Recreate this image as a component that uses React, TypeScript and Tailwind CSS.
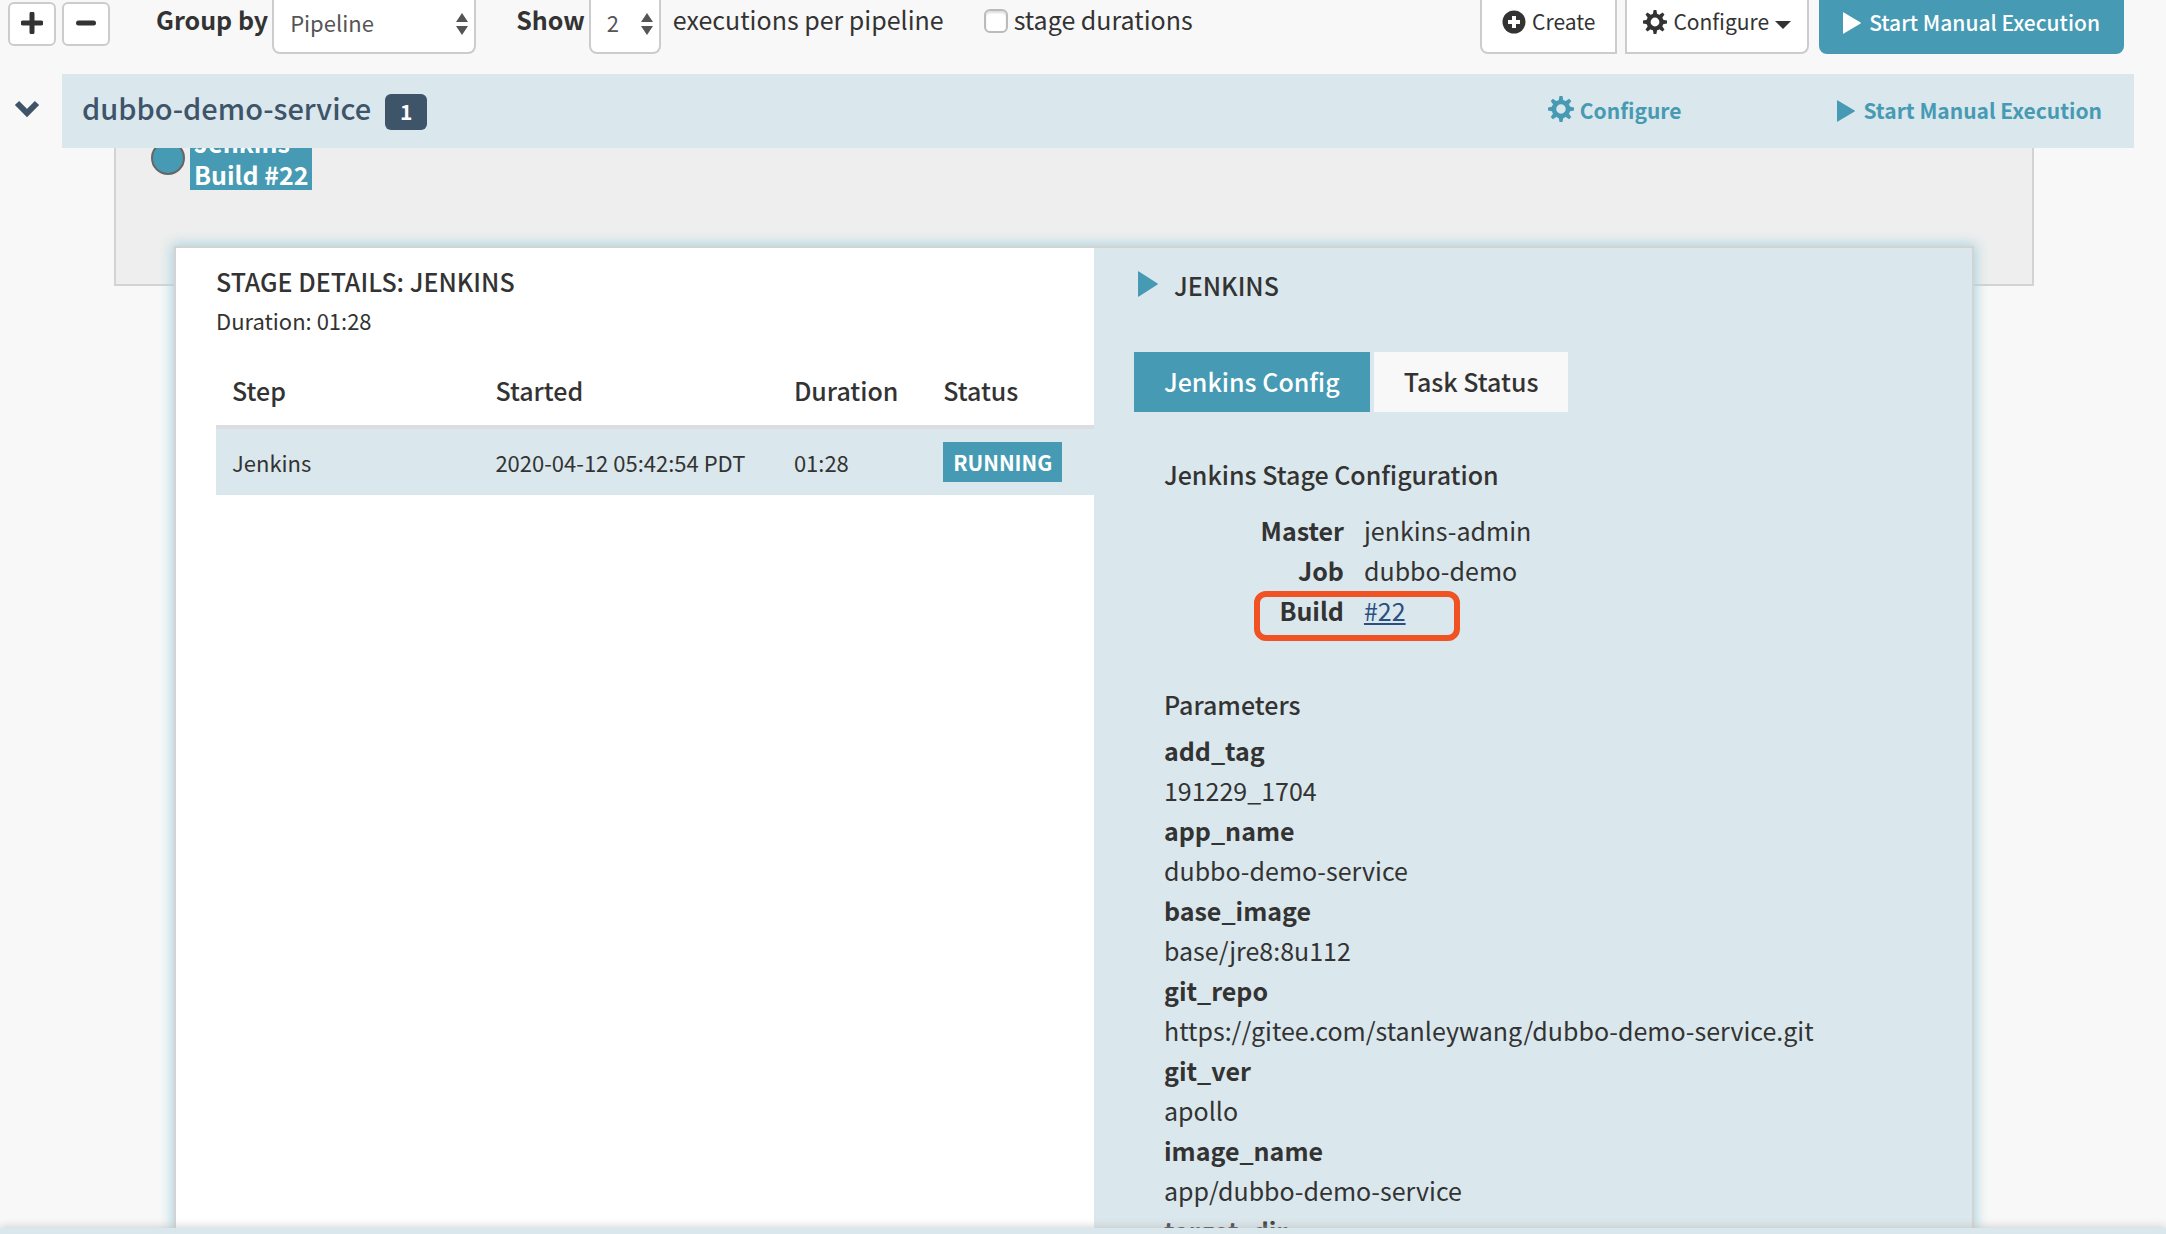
import React, { useState } from 'react';

const parameters = [
    { name: 'add_tag', value: '191229_1704' },
    { name: 'app_name', value: 'dubbo-demo-service' },
    { name: 'base_image', value: 'base/jre8:8u112' },
    { name: 'git_repo', value: 'https://gitee.com/stanleywang/dubbo-demo-service.git' },
    { name: 'git_ver', value: 'apollo' },
    { name: 'image_name', value: 'app/dubbo-demo-service' },
    { name: 'target_dir', value: './dubbo-server/target' },
];

const teeth = [0, 45, 90, 135, 180, 225, 270, 315];

function Cog({ className }: { className?: string }) {
    return (
        <svg viewBox="0 0 24 24" className={className} aria-hidden="true">
            <circle cx="12" cy="12" r="6.5" fill="none" stroke="currentColor" strokeWidth="4.2" />
            {teeth.map(angle => (
                <path key={angle} d="M9.8 4.5 10.6 0h2.8l.8 4.5z" fill="currentColor" transform={`rotate(${angle} 12 12)`} />
            ))}
        </svg>
    );
}

function Play({ className }: { className?: string }) {
    return (
        <svg viewBox="0 0 18 22" preserveAspectRatio="none" className={className} aria-hidden="true">
            <path d="M0 .8Q0 0 .8.5L17.6 10.6q.6.4 0 .8L.8 21.5Q0 22 0 21.2z" fill="currentColor" />
        </svg>
    );
}

function SelectBox({ label, options, className }: { label: string, options: string[], className: string }) {
    return (
        <div className="grid items-center">
            <select aria-label={label} className={`col-start-1 row-start-1 h-[54px] appearance-none rounded-b-lg border-2 border-t-0 border-[#ccc] bg-white pb-2 text-[22px] text-[#555] ${className}`}>
                {options.map(option => <option key={option}>{option}</option>)}
            </select>
            <svg viewBox="0 0 12 22" className="pointer-events-none col-start-1 row-start-1 mr-2 mb-1.5 h-[22px] w-3 justify-self-end text-[#555]" aria-hidden="true">
                <path d="M6 0l6 9H0zM6 22l6-9H0z" fill="currentColor" />
            </svg>
        </div>
    );
}

function Toolbar() {
    return (
        <div className="flex h-[74px] shrink-0 items-start justify-between pl-2 pr-[42px]">
            <div className="flex items-start">
                <div className="flex gap-1.5 pt-0.5">
                    <button aria-label="Expand all" className="grid h-11 w-12 place-items-center rounded-md border-2 border-[#ccc] bg-white pb-0.5">
                        <svg viewBox="0 0 22 22" className="size-[22px]"><path d="M11 2v18M2 11h18" stroke="currentColor" strokeWidth="5" strokeLinecap="round" /></svg>
                    </button>
                    <button aria-label="Collapse all" className="grid h-11 w-12 place-items-center rounded-md border-2 border-[#ccc] bg-white pb-0.5">
                        <svg viewBox="0 0 22 22" className="size-[22px]"><path d="M3.5 11h15" stroke="currentColor" strokeWidth="5" strokeLinecap="round" /></svg>
                    </button>
                </div>
                <span className="ml-[46px] mr-1 leading-[38px] font-bold">Group by</span>
                <SelectBox label="Group by" options={['Pipeline', 'Time Boundary', 'None']} className="w-[204px] pl-4" />
                <span className="ml-10 mr-1 leading-[38px] font-bold">Show</span>
                <SelectBox label="Executions per pipeline" options={['2', '5', '10']} className="w-[72px] pl-4" />
                <span className="ml-3 leading-[38px]">executions per pipeline</span>
                <label className="ml-10 flex items-center gap-1.5 leading-[38px]">
                    <input type="checkbox" className="mt-1 size-6 appearance-none rounded-md border-2 border-[#bbb] bg-white shadow-[inset_0_2px_2px_#ddd]" />
                    stage durations
                </label>
            </div>
            <div className="flex items-start text-[21px]">
                <button className="flex h-[54px] items-center gap-1.5 rounded-bl-lg border-2 border-t-0 border-[#ccc] bg-white px-5 pb-2">
                    <svg viewBox="0 0 24 24" className="size-6" aria-hidden="true">
                        <circle cx="12" cy="12" r="11.5" fill="currentColor" />
                        <path d="M12 6v12M6 12h12" stroke="#fff" strokeWidth="4" />
                    </svg>
                    Create
                </button>
                <button className="ml-2 flex h-[54px] items-center gap-1.5 rounded-br-lg border-2 border-t-0 border-[#ccc] bg-white px-4 pb-2">
                    <Cog className="size-6" />
                    Configure
                    <svg viewBox="0 0 16 8" className="mt-1.5 h-2 w-4" aria-hidden="true"><path d="M0 0h16L8 8z" fill="currentColor" /></svg>
                </button>
                <button className="ml-2.5 flex h-[54px] items-center gap-2 rounded-b-lg bg-[#469ab3] px-6 pb-2 font-medium text-white">
                    <Play className="h-[22px] w-[18px]" />
                    Start Manual Execution
                </button>
            </div>
        </div>
    );
}

function GroupHeader() {
    return (
        <div className="flex h-[74px] shrink-0 items-center pr-8">
            <button aria-label="Collapse group" className="grid w-[62px] place-items-center pr-2 pb-1 text-[#3e5468]">
                <svg viewBox="0 0 26 18" className="h-[18px] w-[26px]"><path d="M3 3l10 10L23 3" fill="none" stroke="currentColor" strokeWidth="6" /></svg>
            </button>
            <div className="flex h-full flex-1 items-center bg-[#dae7ec] pl-5 pr-8">
                <h4 className="pb-1.5 text-[29px] font-medium text-[#3e5468]">dubbo-demo-service</h4>
                <span className="ml-3.5 mt-0.5 h-9 w-[42px] rounded-md bg-[#3e5468] text-center text-[21px] leading-[34px] font-bold text-white">1</span>
                <div className="ml-auto flex items-center gap-[156px] text-[21px] font-bold text-[#469ab3]">
                    <button className="flex items-center gap-1.5"><Cog className="mb-1 size-[26px]" />Configure</button>
                    <button className="flex items-center gap-2"><Play className="h-[22px] w-[18px]" />Start Manual Execution</button>
                </div>
            </div>
        </div>
    );
}

function StepTable() {
    return (
        <table className="mt-5 w-full table-fixed text-left">
            <thead>
                <tr className="border-b-4 border-[#ddd]">
                    <th className="h-[71px] w-[30%] px-4 font-medium">Step</th>
                    <th className="w-[34%] px-4 font-medium">Started</th>
                    <th className="w-[17%] px-4 font-medium">Duration</th>
                    <th className="px-4 font-medium">Status</th>
                </tr>
            </thead>
            <tbody>
                <tr className="bg-[#dae7ec] text-[22px]">
                    <td className="h-[68px] px-4">Jenkins</td>
                    <td className="px-4">2020-04-12 05:42:54 PDT</td>
                    <td className="px-4">01:28</td>
                    <td className="px-4">
                        <span className="inline-block bg-[#469ab3] px-2.5 text-[21px] leading-10 font-bold text-white">RUNNING</span>
                    </td>
                </tr>
            </tbody>
        </table>
    );
}

function StageConfig() {
    const [tab, setTab] = useState('Jenkins Config');

    return (
        <div className="bg-[#dae7ec] pl-10">
            <h5 className="flex items-center gap-4 pt-3.5 pl-1 leading-[46px] font-medium">
                <Play className="mb-0.5 h-[26px] w-5 text-[#469ab3]" />
                JENKINS
            </h5>
            <div className="mt-11 flex gap-1" role="tablist">
                {['Jenkins Config', 'Task Status'].map(name => (
                    <button
                        key={name}
                        role="tab"
                        aria-selected={tab === name}
                        onClick={() => setTab(name)}
                        className={`h-[60px] px-[30px] font-medium ${tab === name ? 'bg-[#469ab3] text-white' : 'bg-[#f8f8f8]'}`}
                    >
                        {name}
                    </button>
                ))}
            </div>
            <div className="pl-[30px] leading-10">
                <h5 className="mt-[42px] font-medium">Jenkins Stage Configuration</h5>
                <dl className="mt-4 grid grid-cols-[180px_1fr] gap-x-5">
                    <dt className="text-right font-bold">Master</dt>
                    <dd>jenkins-admin</dd>
                    <dt className="text-right font-bold">Job</dt>
                    <dd>dubbo-demo</dd>
                    <dt className="text-right font-bold">Build</dt>
                    <dd className="relative">
                        <a href="#22" className="text-[#2a4f80] underline decoration-2 underline-offset-2">#22</a>
                        <span className="pointer-events-none absolute top-px -left-[110px] h-[50px] w-[206px] rounded-xl border-[6px] border-[#f05223]" />
                    </dd>
                </dl>
                <h5 className="mt-[54px] font-medium">Parameters</h5>
                <dl className="mt-1.5">
                    {parameters.map(({ name, value }) => (
                        <React.Fragment key={name}>
                            <dt className="font-bold">{name}</dt>
                            <dd>{value}</dd>
                        </React.Fragment>
                    ))}
                </dl>
            </div>
        </div>
    );
}

export default function App() {
    return (
        <div className="flex h-screen flex-col overflow-hidden bg-[#f8f8f8] font-['Noto_Sans_CJK_SC',sans-serif] text-[25px] text-[#333]">
            <Toolbar />
            <GroupHeader />
            <main className="min-h-0 flex-1 overflow-hidden">
                <div className="ml-[114px] mr-[132px] h-[138px] overflow-hidden border-2 border-t-0 border-[#d3d3d3] bg-[#eee]">
                    <div className="-mt-[22px] flex items-start gap-[5px] pl-[35px]">
                        <span className="mt-[15px] size-[34px] rounded-full border-2 border-[#666] bg-[#469ab3]" />
                        <span className="bg-[#469ab3] px-1 leading-8 font-bold text-white">Jenkins<br />Build #22</span>
                    </div>
                </div>
                <div className="relative -mt-10 ml-[174px] mr-[192px] grid grid-cols-[23fr_22fr] border-2 border-[#d3d3d3] bg-white shadow-[0_0_12px_2px_#a9d3de]">
                    <div className="pt-2.5 pl-10">
                        <h5 className="leading-[46px] font-medium">STAGE DETAILS: JENKINS</h5>
                        <div className="text-[22px] leading-8">Duration: 01:28</div>
                        <StepTable />
                    </div>
                    <StageConfig />
                </div>
            </main>
            <footer className="relative h-1.5 shrink-0 bg-[#dae7ec] shadow-[0_0_10px_#bbb]" />
        </div>
    );
}
